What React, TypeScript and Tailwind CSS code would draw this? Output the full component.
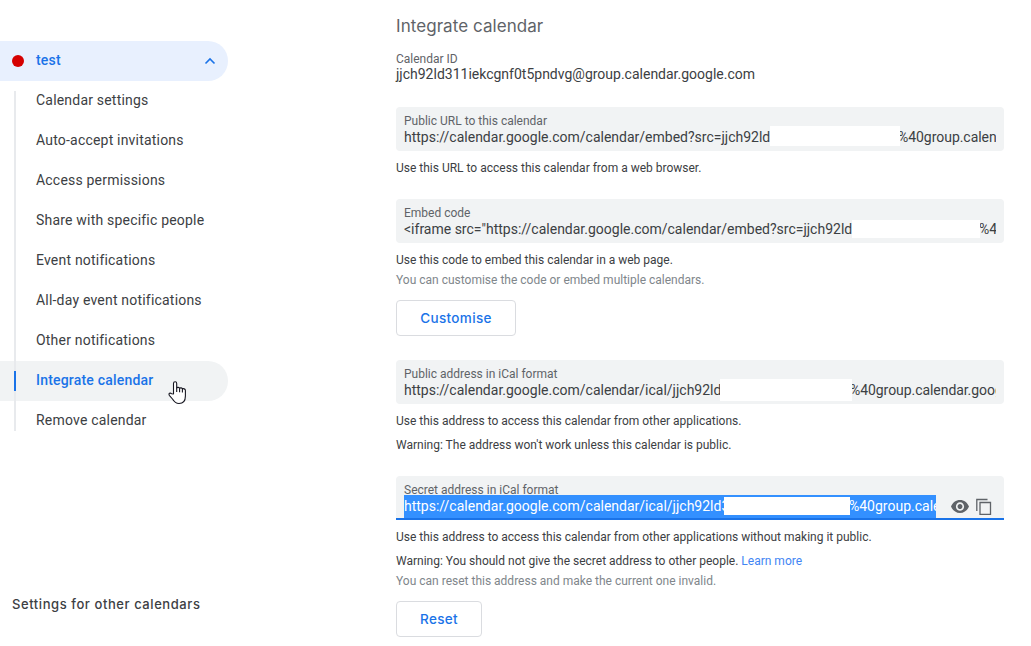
import React from "react";

const nav = [
  "Calendar settings",
  "Auto-accept invitations",
  "Access permissions",
  "Share with specific people",
  "Event notifications",
  "All-day event notifications",
  "Other notifications",
  "Integrate calendar",
  "Remove calendar",
];

function Sidebar() {
  return (
    <aside className="flex w-[396px] shrink-0 flex-col pt-[41px]">
      <div className="flex h-10 w-[228px] items-center rounded-r-full bg-[#e8f0fe] pl-3 pr-3">
        <span className="size-3 rounded-full bg-[#d50000]" />
        <span className="ml-3 flex-1 pb-[2px] text-sm font-medium tracking-[0.2px] text-[#1a73e8]">test</span>
        <svg width="12" height="8" viewBox="0 0 12 8" fill="none" stroke="#1a73e8" strokeWidth="1.6">
          <path d="M1.500 6.500 6 2l4.500 4.500" />
        </svg>
      </div>
      <nav className="relative w-[228px]">
        {nav.map((label) => {
          const active = label === "Integrate calendar";
          return (
            <div
              key={label}
              className={
                "flex h-10 items-center pb-[2px] pl-9 text-sm tracking-[0.2px] " +
                (active ? "rounded-r-full bg-[#f1f3f4] font-medium text-[#1a73e8]" : "text-[#3c4043]")
              }
            >
              {label}
            </div>
          );
        })}
        <span className="absolute left-[14px] top-[10px] h-[340px] w-[2px] bg-[#e8eaed]" />
        <span className="absolute left-[14px] top-[290px] h-5 w-[2px] bg-[#1a73e8]" />
        <svg className="absolute left-[168px] top-[299px]" width="19" height="25" viewBox="0 0 19 25">
          <path
            d="M5.500 14V3.500C5.500 1.200 8.700 1.200 8.700 3.500V8c.6-1 2.600-.8 2.900.3.700-.8 2.500-.5 2.800.6.900-.6 3 0 3 1.600V16c0 5-2.500 7.500-6.400 7.500-3.500 0-5-1.900-6.500-4.500L1.300 15.300c-.9-1.900.8-2.900 2.200-1.600z"
            fill="white"
            stroke="#161620"
            strokeWidth="1.100"
            strokeLinejoin="round"
          />
          <path d="M8.700 7.500v4.500M11.600 8.300v4M14.400 9v3.500" stroke="#161620" strokeWidth="1.100" fill="none" />
        </svg>
      </nav>
      <div className="mt-[153px] pl-3 font-[Inter,sans-serif] text-[13px] font-medium leading-5 tracking-[0.57px] text-[#3c4043]">
        Settings for other calendars
      </div>
    </aside>
  );
}

type FieldProps = {
  label: string;
  before: string;
  beforeClass: string;
  gapClass: string;
  after: string;
  afterClass: string;
  selected?: boolean;
};

function Field({ label, before, beforeClass, gapClass, after, afterClass, selected }: FieldProps) {
  return (
    <div
      className={
        "flex h-11 w-[608px] bg-[#f1f3f4] pl-2 pr-2 " +
        (selected ? "rounded-t border-b-2 border-[#1a73e8]" : "rounded")
      }
    >
      <div className={"pt-[6px] " + (selected ? "w-[532px]" : "w-[592px]")}>
        <div className="h-[13px] text-xs leading-4 text-[#5f6368]">{label}</div>
        <div
          className={
            "relative flex h-[23px] overflow-hidden whitespace-nowrap text-sm leading-[22px] " +
            (selected ? "bg-[#3390ff] text-white" : "text-[#3c4043]")
          }
        >
          <span className={"shrink-0 overflow-hidden " + beforeClass}>{before}</span>
          <span className={"z-10 shrink-0 bg-white " + gapClass} />
          <span className={afterClass}>{after}</span>
        </div>
      </div>
      {selected && (
        <div className="flex items-start gap-[7px] pl-[15px] pt-[22px] text-[#5f6368]">
          <svg className="mt-[2px]" width="18" height="13" viewBox="1 4.500 22 15" preserveAspectRatio="none" fill="currentColor">
            <path d="M12 4.500C7 4.500 2.730 7.610 1 12c1.730 4.390 6 7.500 11 7.500s9.270-3.110 11-7.500c-1.730-4.390-6-7.500-11-7.500zM12 17c-2.760 0-5-2.240-5-5s2.240-5 5-5 5 2.240 5 5-2.240 5-5 5zm0-8c-1.660 0-3 1.340-3 3s1.340 3 3 3 3-1.340 3-3-1.340-3-3-3z" />
          </svg>
          <svg width="16" height="18" viewBox="0 0 16 18" fill="none" stroke="currentColor" strokeWidth="1.300">
            <path d="M.8 13V1.500H11.500" />
            <path d="M4 4.500h10.500v11.800H4z" />
          </svg>
        </div>
      )}
    </div>
  );
}

function Button({ children, width }: { children: string; width: string }) {
  return (
    <button
      className={
        "flex h-9 items-center justify-center rounded border border-[#dadce0] font-[Inter,sans-serif] text-[13.5px] font-medium tracking-[0.35px] text-[#1a73e8] " +
        width
      }
    >
      {children}
    </button>
  );
}

export default function App() {
  return (
    <div className="flex h-[646px] w-[1031px] overflow-hidden bg-white font-['Roboto',sans-serif] text-xs leading-4 text-[#3c4043]">
      <Sidebar />
      <main className="w-[608px] pt-[14px]">
        <h1 className="font-[Inter,sans-serif] text-[17px] leading-6 tracking-[0.06px] text-[#5f6368]">Integrate calendar</h1>
        <div className="mt-[13px] text-[#5f6368]">Calendar ID</div>
        <div className="h-10 text-sm leading-[15px]">jjch92ld311iekcgnf0t5pndvg@group.calendar.google.com</div>
        <Field
          label="Public URL to this calendar"
          before="https://calendar.google.com/calendar/embed?src=jjch92ld"
          beforeClass="w-[366px]"
          gapClass="h-5 w-[130px]"
          after="%40group.calen"
          afterClass="-ml-[2px] tracking-[-0.04px]"
        />
        <p className="mt-[9px]">Use this URL to access this calendar from a web browser.</p>
        <div className="h-[23px]" />
        <Field
          label="Embed code"
          before={'<iframe src="https://calendar.google.com/calendar/embed?src=jjch92ld'}
          beforeClass="w-[448px]"
          gapClass="mt-[2px] h-[18px] w-[128px]"
          after="%4"
          afterClass="-ml-px"
        />
        <p className="mt-[9px]">Use this code to embed this calendar in a web page.</p>
        <p className="mb-3 mt-1 text-[#80868b]">You can customise the code or embed multiple calendars.</p>
        <Button width="w-[120px]">Customise</Button>
        <div className="h-6" />
        <Field
          label="Public address in iCal format"
          before="https://calendar.google.com/calendar/ical/jjch92ld"
          beforeClass="w-[316px]"
          gapClass="h-[22px] w-[132px]"
          after="%40group.calendar.goog"
          afterClass="-ml-[2px] tracking-[-0.06px]"
        />
        <p className="mt-[9px]">Use this address to access this calendar from other applications.</p>
        <p className="mb-[23px] mt-2">Warning: The address won't work unless this calendar is public.</p>
        <Field
          label="Secret address in iCal format"
          before="https://calendar.google.com/calendar/ical/jjch92ld3"
          beforeClass="w-[320px]"
          gapClass="mt-[2px] h-[18px] w-[126px]"
          after="%40group.cale"
          afterClass="-ml-px"
          selected
        />
        <p className="mt-[9px]">Use this address to access this calendar from other applications without making it public.</p>
        <p className="mt-2">
          Warning: You should not give the secret address to other people. <a className="text-[#4285f4]">Learn more</a>
        </p>
        <p className="mb-3 mt-1 text-[#80868b]">You can reset this address and make the current one invalid.</p>
        <Button width="w-[86px]">Reset</Button>
      </main>
    </div>
  );
}
